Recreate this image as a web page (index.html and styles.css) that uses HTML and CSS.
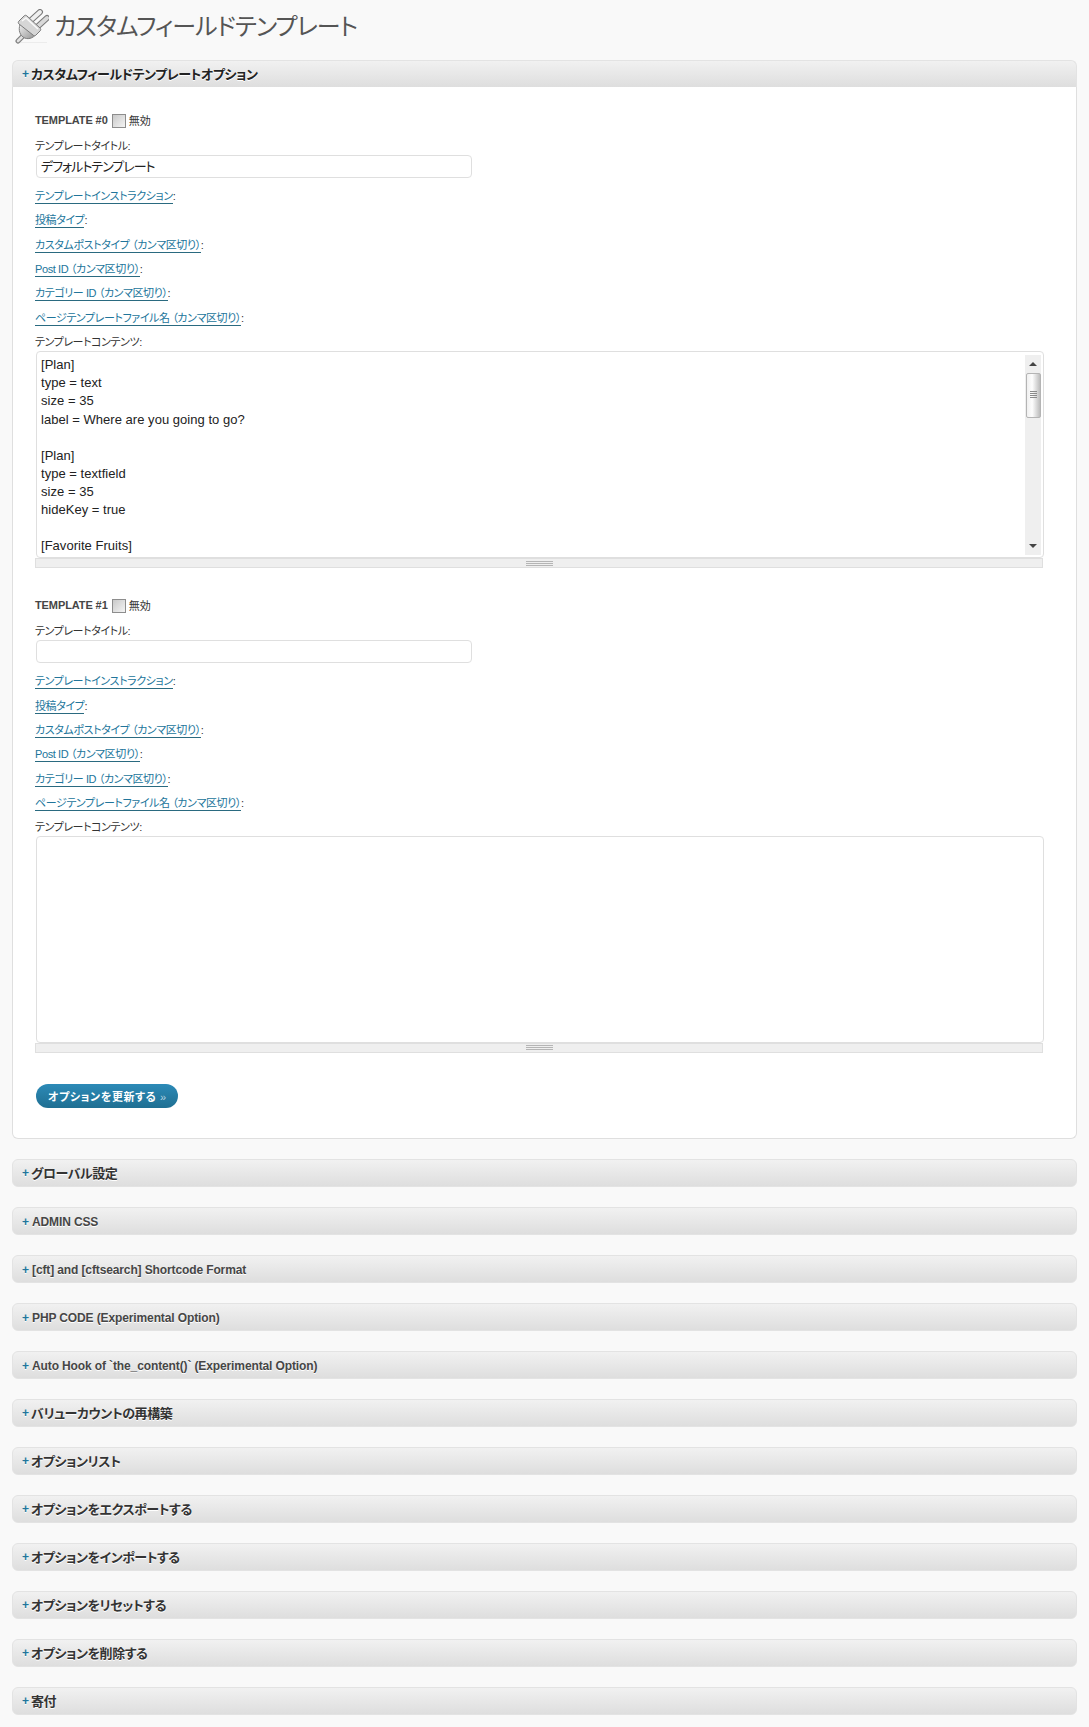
FILE: index.html
```html
<!DOCTYPE html>
<html lang="ja">
<head>
    <meta charset="UTF-8">
    <title>カスタムフィールドテンプレート</title>
    <link rel="stylesheet" href="styles.css">
</head>
<body>
    <div class="wrap">
        <div class="page-title">
            <svg class="plug-icon" width="34" height="36" viewBox="0 0 34 36">
                <defs>
                    <linearGradient id="plug-grad" x1="0" y1="0" x2="1" y2="1">
                        <stop offset="0" stop-color="#f6f6f6"/>
                        <stop offset="1" stop-color="#8e8e8e"/>
                    </linearGradient>
                </defs>
                <path d="M2 33.500h30" stroke="#ececec" stroke-width="1" fill="none"/>
                <path d="M3 32l5-5" stroke="#7f7f7f" stroke-width="5" stroke-linecap="round" fill="none"/>
                <path d="M3 32l5-5" stroke="#e2e2e2" stroke-width="2.600" stroke-linecap="round" fill="none"/>
                <path d="M6 13c-3 6-2 12 2 15s10 2 14-4z" fill="url(#plug-grad)" stroke="#7f7f7f"/>
                <path d="M14 13l11-10" stroke="#7a7a7a" stroke-width="6" stroke-linecap="round" fill="none"/>
                <path d="M14 13l11-10" stroke="#f0f0f0" stroke-width="3.800" stroke-linecap="round" fill="none"/>
                <path d="M21 19l11-10" stroke="#7a7a7a" stroke-width="6" stroke-linecap="round" fill="none"/>
                <path d="M21 19l11-10" stroke="#d9d9d9" stroke-width="3.800" stroke-linecap="round" fill="none"/>
                <path d="M4 12l5-5c1-1 2-1 3 0l13 12c1 1 1 2 0 3l-4 4c-1 1-2 1-3 0L4 15c-1-1-1-2 0-3z" fill="#d6d6d6" stroke="#7a7a7a"/>
                <path d="M7 12l4-3 12 11" stroke="#fafafa" stroke-width="1.500" fill="none"/>
            </svg>
            <h2>カスタムフィールドテンプレート</h2>
        </div>

        <div class="box box-open">
            <h3 class="box-head ja"><span class="plus">+</span>カスタムフィールドテンプレートオプション</h3>
            <div class="box-body">
                <div class="tpl">
                    <div class="tpl-head"><strong>TEMPLATE #0</strong><span class="check"></span><span>無効</span></div>
                    <div class="field-label">テンプレートタイトル:</div>
                    <div class="text-input">デフォルトテンプレート</div>
                    <div class="rows">
                        <div class="row"><a href="#">テンプレートインストラクション</a>:</div>
                        <div class="row"><a href="#">投稿タイプ</a>:</div>
                        <div class="row"><a href="#">カスタムポストタイプ （カンマ区切り）</a>:</div>
                        <div class="row"><a href="#">Post ID （カンマ区切り）</a>:</div>
                        <div class="row"><a href="#">カテゴリー ID （カンマ区切り）</a>:</div>
                        <div class="row"><a href="#">ページテンプレートファイル名 （カンマ区切り）</a>:</div>
                        <div class="row">テンプレートコンテンツ:</div>
                    </div>
                    <div class="text-area">
                        <pre>[Plan]
type = text
size = 35
label = Where are you going to go?

[Plan]
type = textfield
size = 35
hideKey = true

[Favorite Fruits]</pre>
                        <div class="scrollbar">
                            <span class="arrow-up"></span>
                            <div class="thumb"><i></i><i></i><i></i><i></i></div>
                            <span class="arrow-down"></span>
                        </div>
                    </div>
                    <div class="grip"><i></i><i></i><i></i></div>
                </div>

                <div class="tpl tpl-second">
                    <div class="tpl-head"><strong>TEMPLATE #1</strong><span class="check"></span><span>無効</span></div>
                    <div class="field-label">テンプレートタイトル:</div>
                    <div class="text-input"></div>
                    <div class="rows">
                        <div class="row"><a href="#">テンプレートインストラクション</a>:</div>
                        <div class="row"><a href="#">投稿タイプ</a>:</div>
                        <div class="row"><a href="#">カスタムポストタイプ （カンマ区切り）</a>:</div>
                        <div class="row"><a href="#">Post ID （カンマ区切り）</a>:</div>
                        <div class="row"><a href="#">カテゴリー ID （カンマ区切り）</a>:</div>
                        <div class="row"><a href="#">ページテンプレートファイル名 （カンマ区切り）</a>:</div>
                        <div class="row">テンプレートコンテンツ:</div>
                    </div>
                    <div class="text-area text-area-tall"></div>
                    <div class="grip"><i></i><i></i><i></i></div>
                </div>

                <button class="update-btn" type="button">オプションを更新する <span>»</span></button>
            </div>
        </div>

        <div class="box"><h3 class="box-head ja"><span class="plus">+</span>グローバル設定</h3></div>
        <div class="box"><h3 class="box-head"><span class="plus">+</span>ADMIN CSS</h3></div>
        <div class="box"><h3 class="box-head"><span class="plus">+</span>[cft] and [cftsearch] Shortcode Format</h3></div>
        <div class="box"><h3 class="box-head"><span class="plus">+</span>PHP CODE (Experimental Option)</h3></div>
        <div class="box"><h3 class="box-head"><span class="plus">+</span>Auto Hook of `the_content()` (Experimental Option)</h3></div>
        <div class="box"><h3 class="box-head ja"><span class="plus">+</span>バリューカウントの再構築</h3></div>
        <div class="box"><h3 class="box-head ja"><span class="plus">+</span>オプションリスト</h3></div>
        <div class="box"><h3 class="box-head ja"><span class="plus">+</span>オプションをエクスポートする</h3></div>
        <div class="box"><h3 class="box-head ja"><span class="plus">+</span>オプションをインポートする</h3></div>
        <div class="box"><h3 class="box-head ja"><span class="plus">+</span>オプションをリセットする</h3></div>
        <div class="box"><h3 class="box-head ja"><span class="plus">+</span>オプションを削除する</h3></div>
        <div class="box"><h3 class="box-head ja"><span class="plus">+</span>寄付</h3></div>
    </div>
</body>
</html>
```

FILE: styles.css
```css
html, body {
    margin: 0;
    background: #f9f9f9;
}
body {
    font-family: "Liberation Sans", "Noto Sans CJK JP", sans-serif;
    font-size: 11px;
    color: #333;
    font-feature-settings: "palt";
}
.wrap {
    padding: 0 12px 12px 12px;
}
.page-title {
    display: flex;
    align-items: center;
    height: 60px;
}
.plug-icon {
    margin: -6px 5px 0 3px;
    flex: none;
}
.page-title h2 {
    margin: -6px 0 0;
    font-size: 24px;
    font-weight: 400;
    line-height: 36px;
    color: #555;
    letter-spacing: -0.9px;
}
.box {
    margin-bottom: 20px;
    border-radius: 6px;
}
.box-head {
    margin: 0;
    height: 28px;
    box-sizing: border-box;
    display: flex;
    align-items: center;
    padding: 2px 0 0 9px;
    border: 1px solid #e3e3e3;
    border-radius: 6px;
    background: linear-gradient(#f1f1f1, #dedede);
    font-size: 12px;
    font-weight: 700;
    letter-spacing: -0.12px;
    color: #464646;
    text-shadow: 0 1px 0 #fff;
}
.box-head.ja {
    padding-top: 0;
    font-size: 13px;
    letter-spacing: -0.45px;
    color: #333;
}
.plus {
    color: #21759b;
    width: 10px;
    flex: none;
    font-size: 12px;
}
.ja .plus {
    width: 9px;
}
.box-open .box-head {
    border-radius: 6px 6px 0 0;
    border-bottom: 0;
    height: 27px;
    padding-bottom: 1px;
    color: #222;
}
.box-body {
    background: #fff;
    border: 1px solid #dfdfdf;
    border-top: 0;
    border-radius: 0 0 6px 6px;
    padding: 23px 32px 30px 22px;
}
.tpl-head {
    display: flex;
    align-items: center;
    height: 20px;
    color: #333;
}
.tpl-head strong {
    font-size: 11px;
    letter-spacing: -0.1px;
    color: #464646;
}
.check {
    width: 12px;
    height: 12px;
    margin: 2px 3px 0 4px;
    border: 1px solid #8d8d8d;
    background: linear-gradient(135deg, #c9c9c9, #f4f4f4);
}
.field-label {
    margin-top: 6px;
    height: 19px;
    line-height: 21px;
    letter-spacing: -0.4px;
}
.text-input {
    box-sizing: border-box;
    margin-left: 1px;
    width: 436px;
    height: 23px;
    padding-left: 4px;
    border: 1px solid #dfdfdf;
    border-radius: 4px;
    background: #fff;
    font-size: 13px;
    line-height: 21px;
    letter-spacing: -1px;
    color: #222;
}
.rows {
    margin-top: 5px;
}
.row {
    height: 24.33px;
    line-height: 26px;
    letter-spacing: -0.4px;
}
.row a {
    color: #21759b;
    text-decoration: none;
    border-bottom: 1px solid #2a6a80;
    padding-bottom: 1px;
}
.text-area {
    position: relative;
    box-sizing: border-box;
    margin: -2px 0 0 1px;
    height: 207px;
    border: 1px solid #dfdfdf;
    border-radius: 4px;
    background: #fff;
    overflow: hidden;
}
.text-area-tall {
    margin-top: -3px;
}
.text-area pre {
    margin: 0;
    padding: 4px;
    font-family: "Liberation Sans", sans-serif;
    font-size: 13px;
    line-height: 18.1px;
    letter-spacing: 0.03px;
    color: #222;
}
.scrollbar {
    position: absolute;
    top: 3px;
    right: 2px;
    bottom: 2px;
    width: 16px;
    background: #efefef;
    display: flex;
    flex-direction: column;
    align-items: center;
}
.arrow-up, .arrow-down {
    width: 0;
    height: 0;
    border-left: 4px solid transparent;
    border-right: 4px solid transparent;
}
.arrow-up {
    margin-top: 7px;
    border-bottom: 4px solid #444;
}
.arrow-down {
    margin-top: auto;
    margin-bottom: 7px;
    border-top: 4px solid #444;
}
.thumb {
    box-sizing: border-box;
    margin-top: 7px;
    width: 15px;
    height: 45px;
    border: 1px solid #b4b4b4;
    border-radius: 2px;
    background: linear-gradient(90deg, #f0f0f0, #fdfdfd 40%, #bcbcbc);
    display: flex;
    flex-direction: column;
    align-items: center;
    gap: 1px;
    padding-top: 17px;
}
.thumb i {
    display: block;
    width: 7px;
    height: 1px;
    background: #8a8a8a;
}
.grip {
    box-sizing: border-box;
    height: 10px;
    margin-right: 1px;
    border: 1px solid #dfdfdf;
    background: #efefef;
    display: flex;
    flex-direction: column;
    align-items: center;
    justify-content: center;
    gap: 1px;
}
.grip i {
    display: block;
    width: 27px;
    height: 1px;
    background: #b5b5b5;
}
.tpl-second {
    margin-top: 27px;
}
.update-btn {
    display: block;
    margin: 31px 0 0 1px;
    width: 142px;
    height: 24px;
    padding: 0 0 0 12px;
    border: 0;
    border-radius: 12px;
    background: linear-gradient(#2c8ab7, #1f6f92);
    font-family: inherit;
    font-feature-settings: inherit;
    font-size: 11px;
    font-weight: 700;
    letter-spacing: 0.6px;
    text-align: left;
    color: #fff;
    cursor: pointer;
}
.update-btn span {
    color: #b8d4e2;
    font-weight: 400;
}
```
